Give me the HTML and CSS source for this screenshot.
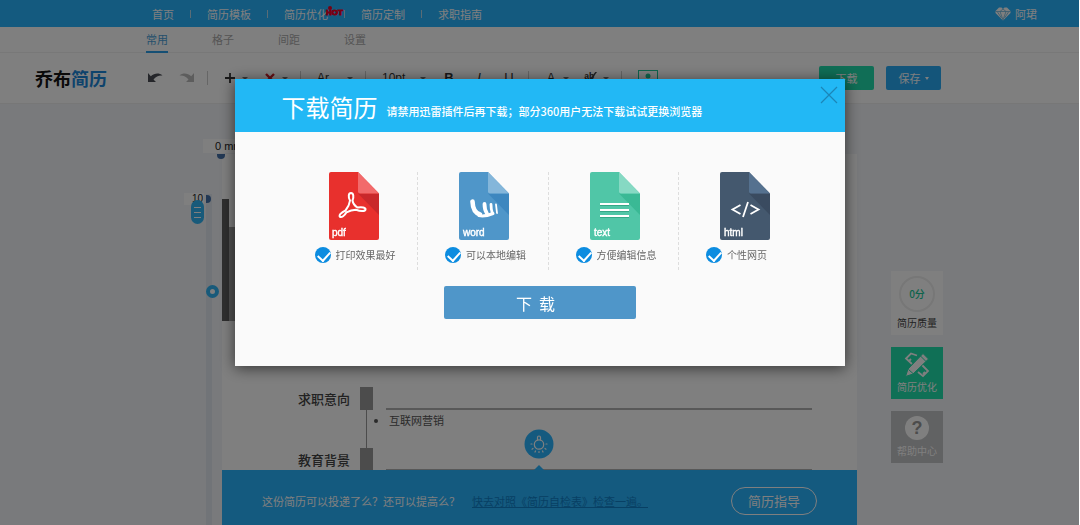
FILE: index.html
```html
<!DOCTYPE html>
<html lang="zh-CN">
<head>
<meta charset="utf-8">
<title>乔布简历</title>
<link rel="stylesheet" href="styles.css">
</head>
<body>
<div class="page">
  <header class="topbar">
    <nav class="topnav">
      <a href="#">首页</a><i class="bar"></i>
      <a href="#">简历模板</a><i class="bar"></i>
      <a href="#" class="has-hot">简历优化<span class="hot">HOT</span></a><i class="bar"></i>
      <a href="#">简历定制</a><i class="bar"></i>
      <a href="#">求职指南</a>
    </nav>
    <a class="user" href="#">
      <svg width="16" height="14" viewBox="0 0 16 14"><path d="M4 .5h2.500L8 2l1.500-1.500H12l3.500 3.500v2L8 13.500.5 6V4z" fill="#fff"/><path d="M.5 4.500h15M5 4.500l3 8.500 3-8.500L8 2zM2.500 5l4 6M13.500 5l-4 6" fill="none" stroke="#6fb6dc" stroke-width=".8"/></svg>
      <span>阿珺</span>
    </a>
  </header>
  <nav class="tabs">
    <a href="#" class="active">常用</a><a href="#">格子</a><a href="#">间距</a><a href="#">设置</a>
  </nav>
  <div class="toolbar">
    <div class="logo">乔布<span>简历</span></div>
    <div class="tools">
      <div class="group first">
        <button class="tool" aria-label="撤销"><svg width="16" height="12" viewBox="0 0 16 12"><path d="M1 1v9h8L6.500 7.500C9 4.500 12 3 15.500 3.500 12 .5 7.500 1 3.800 4.200z" fill="#4a4d55"/></svg></button>
        <button class="tool" aria-label="重做"><svg width="16" height="12" viewBox="0 0 16 12"><path d="M15 1v9H7l2.500-2.500C7 4.500 4 3 .5 3.500 4 .5 8.500 1 12.200 4.200z" fill="#bbb"/></svg></button>
      </div>
      <div class="group">
        <button class="tool drop" aria-label="添加"><svg width="12" height="12" viewBox="0 0 12 12"><path d="M6 1v10M1 6h10" stroke="#333" stroke-width="1.800"/></svg><i class="caret"></i></button>
        <button class="tool drop" aria-label="删除"><svg width="12" height="12" viewBox="0 0 12 12"><path d="M2 2l8 8M10 2l-8 8" stroke="#c8202a" stroke-width="2.400"/></svg><i class="caret"></i></button>
      </div>
      <div class="group"><button class="tool font">Ar<i class="caret"></i></button></div>
      <div class="group">
        <button class="tool size">10pt<i class="caret"></i></button>
        <button class="tool letter"><b>B</b></button>
        <button class="tool letter"><em>I</em></button>
        <button class="tool letter"><u>U</u></button>
      </div>
      <div class="group">
        <button class="tool drop"><span class="glyph">A</span><i class="caret"></i></button>
        <button class="tool drop" aria-label="高亮"><svg width="14" height="14" viewBox="0 0 14 14"><text x="-1" y="8" class="ab">ab</text><path d="M14 0L7 10l-2 2 1-4 6-8z" fill="#444"/></svg><i class="caret"></i></button>
      </div>
      <div class="group last">
        <button class="tool" aria-label="图片"><svg width="20" height="16" viewBox="0 0 20 16"><rect x=".5" y=".5" width="19" height="15" fill="none" stroke="#20c89a"/><circle cx="10" cy="6" r="2.500" fill="#20c89a"/><path d="M5 14c0-5 10-5 10 0z" fill="#20c89a"/></svg></button>
      </div>
    </div>
    <div class="actions">
      <button class="act green">下载</button>
      <button class="act blue">保存<i class="caret"></i></button>
    </div>
  </div>

  <main class="workspace">
    <div class="gutter">
      <span class="origin">0 mm</span>
      <i class="knob top"></i>
      <span class="mark">10</span>
      <i class="knob side-knob"></i>
      <span class="pill"><i></i><i></i><i></i></span>
      <span class="ring"></span>
    </div>
    <div class="paper">
      <div class="photo"></div>
      <section class="entry">
        <h2>求职意向</h2><i class="block"></i><i class="rule"></i>
      </section>
      <ul class="detail"><li>互联网营销</li></ul>
      <section class="entry">
        <h2>教育背景</h2><i class="block"></i><i class="rule"></i>
      </section>
      <div class="tip">
        <svg class="bulb" width="30" height="42" viewBox="0 0 30 42"><circle cx="15" cy="15" r="14.500" fill="#2ab5ff"/><g fill="none" stroke="#fff" stroke-width="1.200" stroke-linecap="round"><circle cx="15" cy="15.500" r="4.700"/><path d="M13.500 11V8.500a1.500 1.500 0 0 1 3 0V11M8 15H7M22 15h1M9 19.500l-1 .7M21 19.500l1 .7M11.500 22l-.5 1M18.500 22l.5 1M15 22.500v1"/></g><path d="M9 42l6-6 6 6z" fill="#2ab5ff"/></svg>
        <p>这份简历可以投递了么？还可以提高么？</p>
        <a href="#">快去对照《简历自检表》检查一遍。</a>
        <button class="guide">简历指导</button>
      </div>
    </div>
    <aside class="side">
      <a href="#" class="card score"><span class="dial">0分</span>简历质量</a>
      <a href="#" class="card improve">
        <svg width="26" height="26" viewBox="0 0 26 26"><g fill="none" stroke="#fff" stroke-width="1.800"><path d="M8 12L2 6.500 7 1.500l6 2M5 9l2-2M18 13l6 6-5 5-5-4M19 22l2-2"/></g><path d="M19 1.500l5.500 5.500L9 22l-7.500 2.500L4 17z" fill="#fff" stroke="#20e0ac"/><path d="M16.500 4l5.500 5.500M4.500 17.500l4.500 4" stroke="#20e0ac"/></svg>
        简历优化</a>
      <a href="#" class="card help"><span class="question">?</span>帮助中心</a>
    </aside>
  </main>
</div>

<div class="overlay">
  <div class="modal" role="dialog" aria-labelledby="dlg-title">
    <header class="modal-head">
      <h1 id="dlg-title">下载简历</h1>
      <p>请禁用迅雷插件后再下载；部分360用户无法下载试试更换浏览器</p>
      <button class="close" aria-label="关闭"><svg width="18" height="18" viewBox="0 0 18 18"><path d="M1 1l16 16M17 1L1 17" stroke="#1b86b8" stroke-width="1.200"/></svg></button>
    </header>
    <div class="formats">
      <div class="format">
        <svg width="50" height="68" viewBox="0 0 50 68"><path d="M2 0h27l21 21.500V66a2 2 0 0 1-2 2H2a2 2 0 0 1-2-2V2a2 2 0 0 1 2-2z" fill="#e8302d"/><path d="M29 21.500h21V43z" fill="#c9282b"/><path d="M29 0v19.500a2 2 0 0 0 2 2h19z" fill="#f26a6b"/><path d="M21 28.500C19 25 19.500 21 22 21s3 4 1.500 7.500c.5 3 2.500 5.500 5 7 4.500-.8 8.300 0 8 2s-5 2-9.500.3c-3.500.2-6.500 1-9.500 2.500-2 3.500-5 5.500-6.500 4.500s1-4.500 5.500-6.300c2.500-3 4-6 4.500-10z" fill="none" stroke="#fff" stroke-width="2" stroke-linejoin="round"/><text class="ext" x="3" y="64">pdf</text></svg>
        <label><input type="checkbox" checked>打印效果最好</label>
      </div>
      <div class="format">
        <svg width="50" height="68" viewBox="0 0 50 68"><path d="M2 0h27l21 21.500V66a2 2 0 0 1-2 2H2a2 2 0 0 1-2-2V2a2 2 0 0 1 2-2z" fill="#4f96c9"/><path d="M29 21.500h21V43z" fill="#3d87bf"/><path d="M29 0v19.500a2 2 0 0 0 2 2h19z" fill="#84b6da"/><g fill="none" stroke="#fff" stroke-linecap="round"><path d="M13.500 29.500c.2 6 2.500 11.500 7.500 13" stroke-width="4.600"/><path d="M20 43.500c4 1 9 0 14-2" stroke-width="3"/><path d="M25.500 32c0 4 .8 7 2.500 9.500" stroke-width="3.800"/><path d="M32 32.500c0 3 .4 6 1.300 8.500" stroke-width="2.800"/><path d="M37 32.500l1 8.500" stroke-width="1.800"/></g><text class="ext" x="4" y="64">word</text></svg>
        <label><input type="checkbox" checked>可以本地编辑</label>
      </div>
      <div class="format">
        <svg width="50" height="68" viewBox="0 0 50 68"><path d="M2 0h27l21 21.500V66a2 2 0 0 1-2 2H2a2 2 0 0 1-2-2V2a2 2 0 0 1 2-2z" fill="#50c6a7"/><path d="M29 21.500h21V43z" fill="#3ab995"/><path d="M29 0v19.500a2 2 0 0 0 2 2h19z" fill="#86d9c3"/><path d="M10 33h29M10 39h29M10 45h29" stroke="#2e9d7e" stroke-width="1.500"/><path d="M10 32h29M10 38h29M10 44h29" stroke="#fff" stroke-width="1.800"/><text class="ext" x="4" y="64">text</text></svg>
        <label><input type="checkbox" checked>方便编辑信息</label>
      </div>
      <div class="format">
        <svg width="50" height="68" viewBox="0 0 50 68"><path d="M2 0h27l21 21.500V66a2 2 0 0 1-2 2H2a2 2 0 0 1-2-2V2a2 2 0 0 1 2-2z" fill="#44586e"/><path d="M29 21.500h21V43z" fill="#3a4b60"/><path d="M29 0v19.500a2 2 0 0 0 2 2h19z" fill="#55718f"/><path d="M20.500 33l-8 4.500 8 4.500M30.500 33l8 4.500-8 4.500M28 30l-5 15" fill="none" stroke="#fff" stroke-width="1.800"/><text class="ext" x="4" y="64">html</text></svg>
        <label><input type="checkbox" checked>个性网页</label>
      </div>
    </div>
    <button class="download">下&nbsp; 载</button>
  </div>
</div>
</body>
</html>
```
FILE: styles.css
```css
* { box-sizing: border-box; margin: 0; padding: 0; }
body {
  font-family: "Noto Sans CJK SC", "Liberation Sans", sans-serif;
  font-size: 11px;
  line-height: 16px;
  color: #555;
  background: #fff;
  border-right: 1px solid #fff;
  overflow: hidden;
}
a { color: inherit; text-decoration: none; }
button { font: inherit; color: inherit; border: 0; background: none; cursor: pointer; }
svg { display: block; flex: none; }
.page { display: flex; flex-direction: column; height: 100vh; }

.topbar {
  display: flex;
  align-items: center;
  justify-content: space-between;
  height: 27px;
  padding: 0 42px 0 152px;
  background: #28b4ff;
  color: #fff;
}
.topnav { display: flex; align-items: center; gap: 16px; }
.bar { width: 1px; height: 8px; background: #b4d8ec; }
.has-hot { position: relative; }
.hot {
  position: absolute;
  left: 42px;
  top: -1px;
  font: bold 8px/16px "Liberation Sans", sans-serif;
  color: #f00024;
  -webkit-text-stroke: 1px #f00024;
}
.hot::before {
  content: "";
  position: absolute;
  left: 2px;
  top: 1px;
  width: 4px;
  height: 4px;
  border-radius: 50%;
  background: #f00024;
}
.user { display: flex; align-items: center; gap: 4px; }

.tabs {
  display: flex;
  gap: 44px;
  height: 26px;
  padding-left: 146px;
  border-bottom: 1px solid #f0f0f0;
  color: #aaa;
  line-height: 24px;
}
.tabs a { height: 26px; }
.tabs .active { color: #4a9fd8; border-bottom: 2px solid #2a9fe8; }

.toolbar {
  display: flex;
  align-items: center;
  height: 51px;
  padding: 0 138px 0 35px;
  border-bottom: 1px solid #eee;
}
.logo { width: 112px; font-size: 18px; line-height: 24px; font-weight: 700; color: #151515; }
.logo span { color: #1c86d8; }
.tools { display: flex; align-items: center; font-family: "Liberation Sans", sans-serif; font-size: 12px; color: #333; }
.group { display: flex; align-items: center; gap: 16px; padding: 0 12px 0 16px; border-right: 1px solid #ccc; height: 14px; }
.group.first { padding-left: 0; }
.group.last { border-right: 0; }
.tool { display: flex; align-items: center; }
.drop { gap: 6px; }
.drop svg, .glyph { width: 12px; overflow: visible; }
.ab { font: bold 10px "Liberation Sans", sans-serif; fill: #333; }
.caret { border: 3px solid transparent; border-bottom: 0; border-top-color: #777; }
.font { width: 36px; justify-content: space-between; }
.size { width: 44px; justify-content: space-between; }
.letter { width: 14px; justify-content: center; font-size: 13px; }
.actions { display: flex; gap: 12px; margin-left: auto; }
.act { display: flex; align-items: center; justify-content: center; gap: 4px; width: 55px; height: 24px; border-radius: 2px; color: #fff; }
.act .caret { border-width: 3px 2px 0; border-top-color: #fff; }
.green { background: #20dcac; }
.blue { background: #28aaf5; }

.workspace { display: flex; flex: 1; min-height: 0; padding-right: 136px; background: #f3f5f8; }
.gutter { position: relative; width: 222px; flex: none; }
.gutter::before { content: ""; position: absolute; left: 206px; top: 90px; bottom: 0; width: 6px; background: #e2e9f1; }
.gutter > * { position: absolute; }
.origin { left: 203px; top: 35px; width: 40px; height: 14px; padding-left: 12px; background: #fff; font: 11px/14px "Liberation Sans", sans-serif; color: #222; z-index: 1; }
.knob { background: #4470a8; }
.knob.top { left: 217px; top: 50px; width: 8px; height: 5px; border-radius: 0 0 5px 5px; z-index: 1; }
.knob.side-knob { left: 206px; top: 91px; width: 5px; height: 8px; border-radius: 0 5px 5px 0; }
.mark { left: 184px; top: 89px; width: 20px; padding-left: 8px; background: #fff; font: 10px/12px "Liberation Sans", sans-serif; color: #222; }
.pill { left: 191px; top: 96px; width: 13px; height: 24px; border-radius: 7px; background: #30b4f5; display: flex; flex-direction: column; align-items: center; justify-content: center; gap: 4px; }
.pill i { width: 7px; height: 1px; background: #fff; }
.ring { left: 206px; top: 181px; width: 13px; height: 13px; border: 4px solid #30b4f5; border-radius: 50%; background: #fff; }

.paper { position: relative; flex: 1; background: #fff; margin-top: 50px; padding-top: 45px; }
.photo { width: 230px; height: 122px; background: linear-gradient(#5e5e5e, #5e5e5e) 0 0 / 7px 100% no-repeat, linear-gradient(#a0a0a0, #a0a0a0) 0 28px no-repeat; margin-bottom: 66px; }
.entry { display: flex; height: 23px; align-items: center; padding: 0 45px 0 76px; }
.entry h2 { width: 62px; font-size: 13px; line-height: 23px; font-weight: 500; color: #444; }
.block { width: 13px; height: 23px; background: #999; }
.rule { flex: 1; align-self: flex-end; height: 2px; margin-left: 13px; background: #b0b0b0; }
.detail { margin-left: 144px; height: 38px; padding: 2px 0 0 22px; border-left: 1px solid #999; }
.tip { position: absolute; left: 0; right: 0; bottom: 0; height: 55px; display: flex; align-items: center; padding: 6px 40px 0; background: #28b4ff; color: #fff; }
.tip a { margin-left: 12px; color: #1080c8; text-decoration: underline; }
.bulb { position: absolute; left: 302px; top: -41px; }
.guide { margin-left: auto; width: 86px; height: 28px; border: 1px solid #fff; border-radius: 14px; font-size: 13px; }

.side { display: flex; flex-direction: column; gap: 12px; width: 52px; margin-left: 34px; padding-top: 167px; flex: none; }
.card { display: flex; flex-direction: column; align-items: center; justify-content: space-between; height: 52px; padding: 5px 0 4px; font-size: 10px; line-height: 16px; color: #fff; }
.score { height: 64px; background: #fff; color: #444; }
.dial { width: 36px; height: 36px; border: 2px solid #eee; border-radius: 50%; line-height: 32px; text-align: center; color: #18c898; font-weight: 500; }
.improve { background: #20e0ac; }
.help { background: #c3c4c6; }
.question { width: 24px; height: 24px; border-radius: 50%; background: #fff; color: #999; font: bold 18px/24px "Liberation Sans", sans-serif; text-align: center; }

.overlay { position: fixed; z-index: 10; inset: 0 1px 0 0; display: flex; align-items: flex-start; justify-content: center; padding-top: 79px; background: rgba(0, 0, 0, .5); }
.modal { width: 610px; padding-bottom: 47px; background: #fafafa; box-shadow: 0 2px 14px rgba(0, 0, 0, .6); }
.modal-head { display: flex; align-items: flex-start; height: 53px; padding: 0 7px 0 47px; background: #22b8f5; color: #fff; }
.modal-head h1 { font-size: 24px; line-height: 56px; font-weight: 400; }
.modal-head p { margin-left: 9px; line-height: 64px; font-weight: 500; }
.close { margin: 7px 0 0 auto; }
.formats { display: grid; grid-template-columns: repeat(4, 1fr); padding: 40px 35px 0 53px; }
.format { display: flex; flex-direction: column; height: 98px; gap: 7px; padding-left: 41px; border-right: 1px dashed #ddd; }
.format:last-child { border-right: 0; }
.format label { display: flex; align-items: center; gap: 5px; margin-left: -14px; font-size: 10px; line-height: 16px; color: #666; white-space: nowrap; }
.format input { appearance: none; position: relative; width: 16px; height: 16px; border-radius: 50%; background: #0c8ce0; }
.format input::after { content: ""; position: absolute; left: 5px; top: 2px; width: 6px; height: 10px; border: solid #fff; border-width: 0 2px 2px 0; transform: rotate(42deg); }
.ext { font: 10px "Liberation Sans", sans-serif; fill: #fff; stroke: #fff; stroke-width: .4px; }
.download { display: block; width: 192px; height: 33px; margin: 16px auto 0; padding-right: 8px; border-radius: 2px; background: #4f96c9; color: #fff; font-size: 16px; }
```
